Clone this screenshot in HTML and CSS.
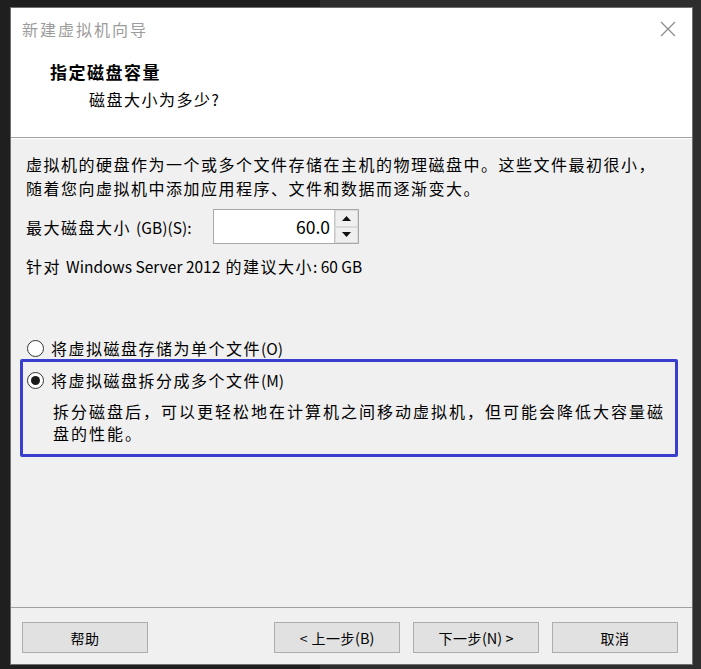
FILE: index.html
```html
<!DOCTYPE html>
<html lang="zh-CN">
<head>
    <meta charset="UTF-8">
    <meta name="viewport" content="width=device-width, initial-scale=1.0">
    <title>新建虚拟机向导</title>
    <link rel="stylesheet" href="styles.css">
</head>
<body>
    <div class="dialog">
        <div class="header">
            <div class="titlebar">
                <span class="title">新建虚拟机向导</span>
                <span class="close">
                    <svg width="16" height="16" viewBox="0 0 16 16">
                        <path d="M1 1 L15 15 M15 1 L1 15" stroke="#8a8a8a" stroke-width="1.2" fill="none"/>
                    </svg>
                </span>
            </div>
            <div class="heading">指定磁盘容量</div>
            <div class="subheading">磁盘大小为多少<span class="en">?</span></div>
        </div>

        <div class="content">
            <p class="intro">虚拟机的硬盘作为一个或多个文件存储在主机的物理磁盘中。这些文件最初很小，<br>随着您向虚拟机中添加应用程序、文件和数据而逐渐变大。</p>

            <div class="size-row">
                <label class="size-label">最大磁盘大小 <span class="en">(GB)(S):</span></label>
                <div class="spin">
                    <div class="spin-value en">60.0</div>
                    <div class="spin-buttons">
                        <span class="spin-btn">
                            <svg width="9" height="5" viewBox="0 0 9 5"><path d="M0 5 L4.5 0 L9 5 Z" fill="#111"/></svg>
                        </span>
                        <span class="spin-btn">
                            <svg width="9" height="5" viewBox="0 0 9 5"><path d="M0 0 L9 0 L4.5 5 Z" fill="#111"/></svg>
                        </span>
                    </div>
                </div>
            </div>

            <p class="hint">针对 <span class="en">Windows Server 2012</span> 的建议大小<span class="en">: 60 GB</span></p>

            <label class="radio">
                <span class="radio-circle"></span>
                将虚拟磁盘存储为单个文件<span class="en">(O)</span>
            </label>

            <div class="selected-box">
                <label class="radio">
                    <span class="radio-circle checked"></span>
                    将虚拟磁盘拆分成多个文件<span class="en">(M)</span>
                </label>
                <p class="desc">拆分磁盘后，可以更轻松地在计算机之间移动虚拟机，但可能会降低大容量磁<br>盘的性能。</p>
            </div>
        </div>

        <div class="footer">
            <button class="button">帮助</button>
            <div class="nav-buttons">
                <button class="button">&lt;&nbsp;上一步<span class="en">(B)</span></button>
                <button class="button">下一步<span class="en">(N)&nbsp;&gt;</span></button>
                <button class="button">取消</button>
            </div>
        </div>
    </div>
</body>
</html>
```

FILE: styles.css
```css
body {
    margin: 0;
    padding: 0;
    background: linear-gradient(90deg, #1f1f1f 320px, #2e2e2e 320px);
    font-family: "Noto Sans CJK SC", "Noto Sans", sans-serif;
    font-size: 16px;
    letter-spacing: 1.5px;
    color: #000;
}
.dialog {
    margin: 7px 0 0 10px;
    width: 681px;
    height: 656px;
    border: 1px solid #707070;
    background: #f0f0f0;
    display: flex;
    flex-direction: column;
}
.en {
    font-size: 15.5px;
    letter-spacing: 0;
}

/* шапка */
.header {
    background: #fff;
    height: 119px;
    padding: 10px 0 0 11px;
    border-bottom: 1px solid #a0a0a0;
}
.titlebar {
    display: flex;
    justify-content: space-between;
    align-items: center;
    height: 22px;
    line-height: 22px;
    padding-right: 16px;
}
.title {
    color: #9c9c9c;
    letter-spacing: 2px;
}
.close {
    display: flex;
}
.heading {
    margin-top: 21px;
    padding-left: 28px;
    line-height: 22px;
    font-size: 17px;
    font-weight: bold;
}
.subheading {
    margin-top: 5px;
    padding-left: 67px;
    line-height: 22px;
}

/* основная часть */
.content {
    flex: 1;
    border-top: 1px solid #fff;
    padding: 13px 15px 0 15px;
}
.intro {
    margin: 0;
    line-height: 24px;
}
.size-row {
    display: flex;
    align-items: center;
    margin-top: 9px;
    height: 35px;
}
.size-label {
    width: 187px;
}
.spin {
    display: flex;
    height: 33px;
    border: 1px solid #a8a8a8;
    background: #fff;
}
.spin-value {
    width: 116px;
    padding-right: 4px;
    text-align: right;
    line-height: 33px;
    font-size: 17.5px;
}
.spin-buttons {
    display: flex;
    flex-direction: column;
    width: 23px;
    border-left: 1px solid #c8c8c8;
}
.spin-btn {
    flex: 1;
    display: flex;
    align-items: center;
    justify-content: center;
    background: #efefef;
    border: 1px solid #dadada;
}
.hint {
    margin: 10px 0 0 0;
    line-height: 24px;
}
.radio {
    display: flex;
    align-items: center;
    line-height: 20px;
    height: 20px;
    margin-top: 60px;
}
.radio-circle {
    width: 15px;
    height: 15px;
    border: 1px solid #333;
    border-radius: 50%;
    background: #fff;
    margin: 0 7px 0 1px;
    display: flex;
    align-items: center;
    justify-content: center;
}
.radio-circle.checked::after {
    content: "";
    width: 9px;
    height: 9px;
    border-radius: 50%;
    background: #1a1a1a;
}
.selected-box {
    margin-top: 1px;
    margin-left: -6px;
    width: 649px;
    border: 3px solid #3a3ecc;
    border-radius: 2px;
    padding: 8px 0 10px 3px;
}
.selected-box .radio {
    margin-top: 0;
}
.desc {
    margin: 10px 0 0 27px;
    line-height: 22px;
    letter-spacing: 2px;
}

/* низ */
.footer {
    display: flex;
    justify-content: space-between;
    border-top: 1px solid #a0a0a0;
    padding: 14px 14px 11px 11px;
}
.nav-buttons {
    display: flex;
    gap: 13px;
}
.button {
    width: 126px;
    height: 31px;
    background: #e1e1e1;
    border: 1px solid #adadad;
    font-family: "Noto Sans CJK SC", "Noto Sans", sans-serif;
    font-size: 14px;
    letter-spacing: 0.5px;
    color: #000;
    padding: 0;
}
.button .en {
    font-size: 14.5px;
}
```
